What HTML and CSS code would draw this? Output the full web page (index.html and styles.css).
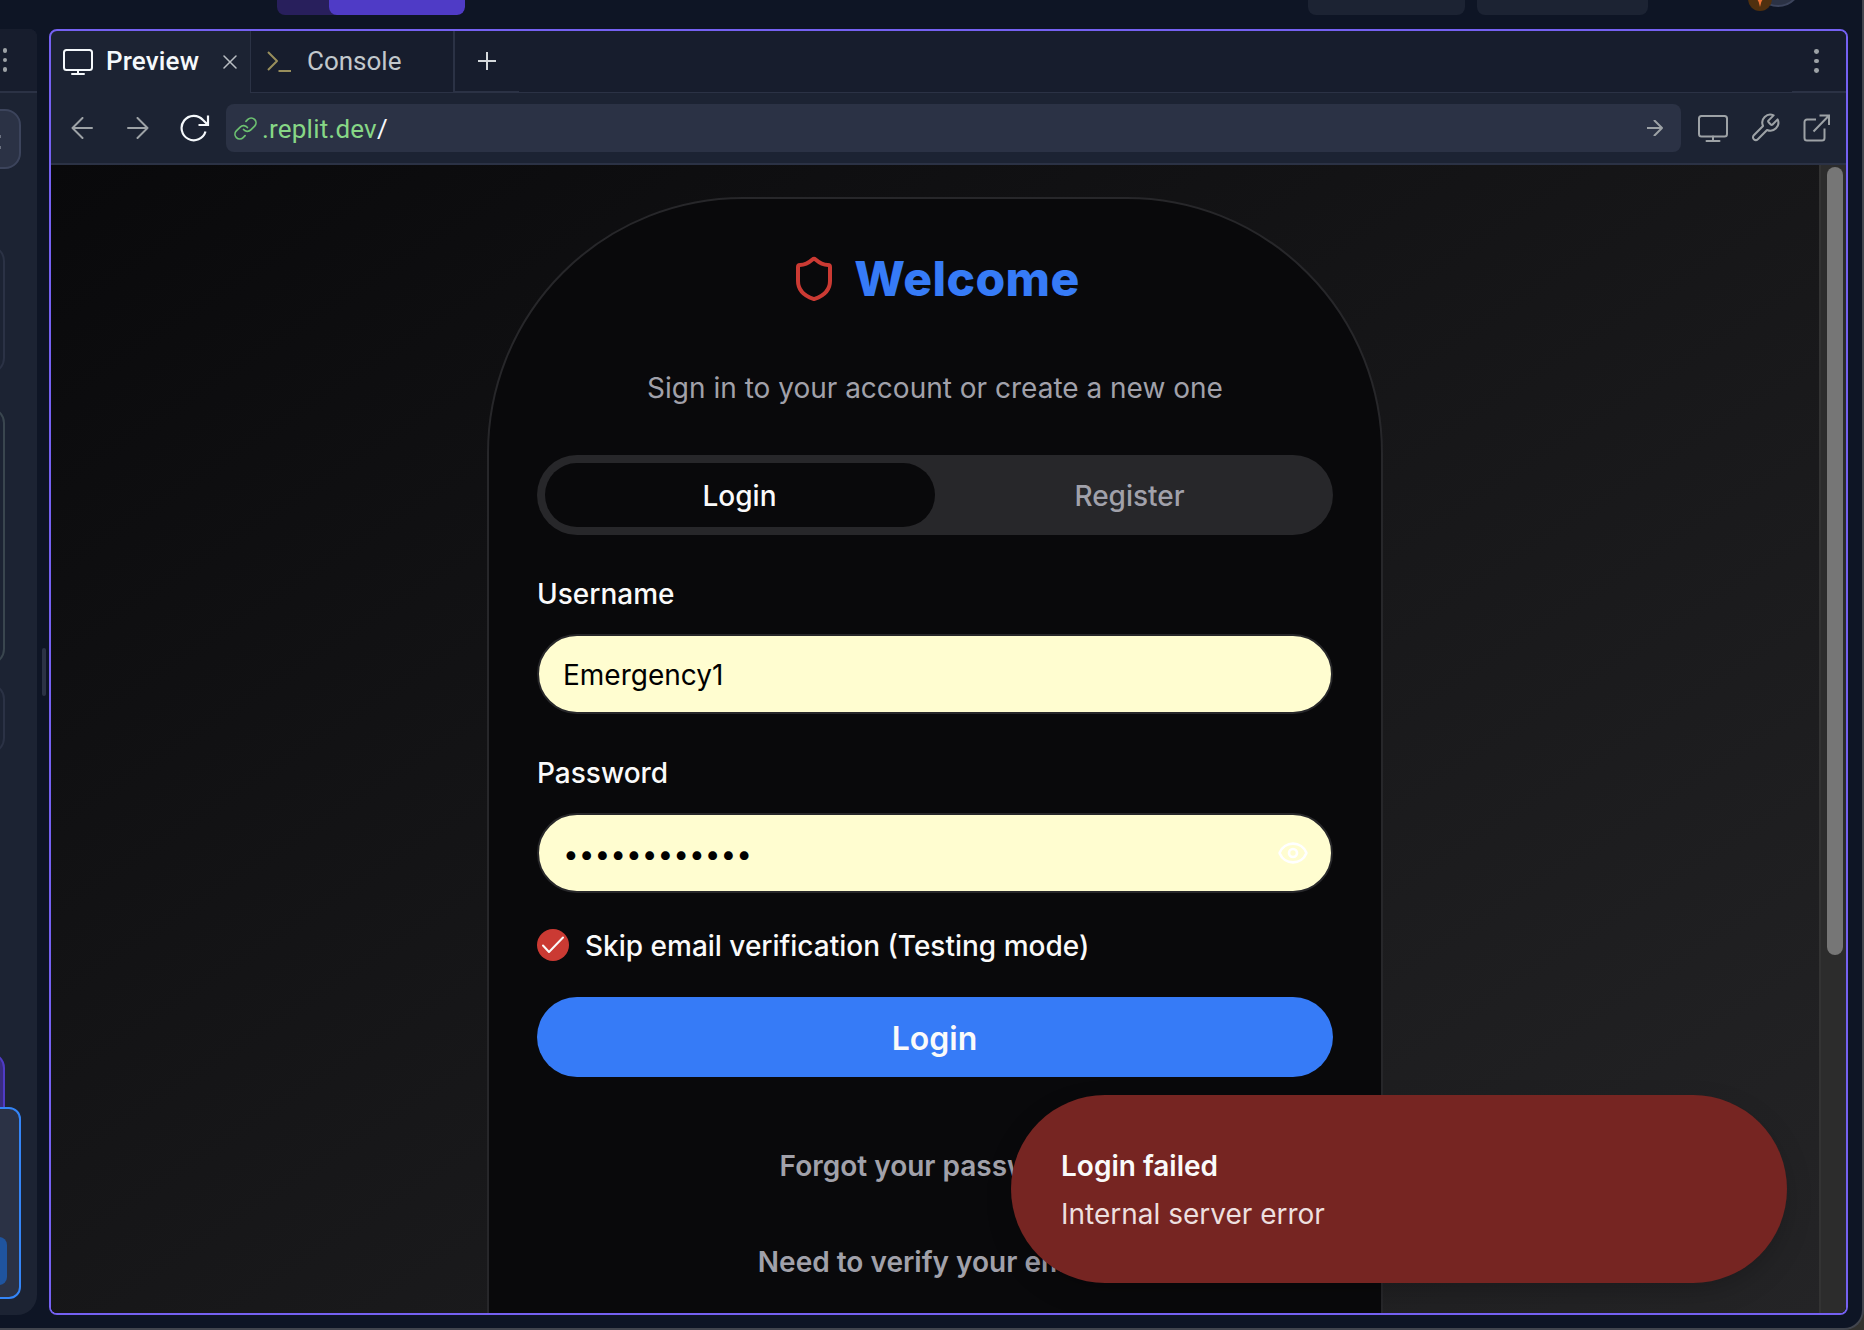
FILE: index.html
```html
<!DOCTYPE html>
<html lang="en">
<head>
<meta charset="utf-8">
<title>Preview</title>
<link rel="stylesheet" href="styles.css">
</head>
<body>
<div class="window">
  <header class="topbar">
    <div class="run"><div class="run-main"></div></div>
    <div class="chip chip-a"></div>
    <div class="chip chip-b"></div>
    <div class="avatars"><svg width="52" height="14" viewBox="0 0 52 14"><circle cx="30" cy="-17" r="23" fill="#2b3245" stroke="#3c445c" stroke-width="2"/><circle cx="12" cy="-1" r="12" fill="#50300f"/><path d="M8.500-2h7l-2.200 4-1.300 5-1.300-5z" fill="#ee7134"/></svg></div>
  </header>
  <div class="workspace">
    <aside class="side">
      <div class="side-head"><span class="dots"><i></i><i></i><i></i></span></div>
      <div class="side-body">
        <div class="frag pill"><i></i><i></i></div>
        <div class="frag box1"></div>
        <div class="frag box2"></div>
        <div class="frag box3"></div>
        <div class="frag purple"></div>
        <div class="frag prompt"><div class="send"></div></div>
      </div>
    </aside>
    <div class="gutter"><div class="handle"></div></div>
    <main class="pane">
      <nav class="tabs">
        <div class="tab active">
          <svg class="ic-mon" width="30" height="26" viewBox="0 0 30 26"><rect x="1" y="1" width="28" height="20" rx="2.500"/><path d="M15 21v4M9 25h12"/></svg>
          <span class="tab-name">Preview</span>
          <svg class="ic-x" width="14" height="14" viewBox="0 0 14 14"><path d="M1 1l12 12M13 1L1 13"/></svg>
        </div>
        <div class="tab console">
          <svg class="ic-term" width="25" height="21" viewBox="0 0 25 21"><path d="M1 1l9 9-9 9M11.500 20H24"/></svg>
          <span class="tab-name">Console</span>
        </div>
        <div class="add"><svg width="18" height="18" viewBox="0 0 18 18"><path d="M9 0v18M0 9h18"/></svg></div>
        <div class="spacer"></div>
        <div class="menu"><span class="dots"><i></i><i></i><i></i></span></div>
      </nav>
      <div class="toolbar">
        <svg class="nav-back" width="22" height="22" viewBox="0 0 22 22"><path d="M11.500 1L1.500 11l10 10M1.500 11H21"/></svg>
        <svg class="nav-fwd" width="22" height="22" viewBox="0 0 22 22"><path d="M10.500 1l10 10-10 10M20.500 11H1"/></svg>
        <svg class="nav-reload" width="30" height="28" viewBox="0 0 30 28"><path d="M25.500 17.500A12.200 12.200 0 1 1 23 6l5 5M28 1.500V11h-9.500"/></svg>
        <div class="url">
          <svg class="ic-link" width="23" height="23" viewBox="0 0 24 24"><path d="M10 13a5 5 0 0 0 7.540.540l4-4a5 5 0 0 0-7.070-7.070l-2 2M14 11a5 5 0 0 0-7.540-.540l-4 4a5 5 0 0 0 7.070 7.070l2-2"/></svg>
          <span class="url-text">.replit.dev<b>/</b></span>
          <svg class="ic-go" width="16" height="16" viewBox="0 0 16 16"><path d="M7.500.500L15 8l-7.500 7.500M15 8H0"/></svg>
        </div>
        <svg class="tool t-mon" width="30" height="27" viewBox="0 0 30 27"><rect x="1" y="1" width="28" height="20.500" rx="2.500"/><path d="M15 21.500V26M8.500 26h13"/></svg>
        <svg class="tool t-wrench" width="32" height="32" viewBox="0 0 24 24"><path d="M14.700 6.300a1 1 0 0 0 0 1.400l1.600 1.600a1 1 0 0 0 1.400 0l3.770-3.770a6 6 0 0 1-7.940 7.940l-6.910 6.910a2.120 2.120 0 0 1-3-3l6.910-6.910a6 6 0 0 1 7.940-7.940l-3.760 3.760z"/></svg>
        <svg class="tool t-ext" width="27" height="28" viewBox="0 0 27 28"><path d="M13 5.500H4A2.500 2.500 0 0 0 1.500 8v16A2.500 2.500 0 0 0 4 26.500h15a2.500 2.500 0 0 0 2.500-2.500v-9.500M16.500 1.500H26V11M26 1.500L10.500 17.500"/></svg>
      </div>
      <div class="page">
        <div class="viewport">
          <section class="card">
            <div class="title">
              <svg width="48" height="48" viewBox="0 0 24 24"><path d="M20 13c0 5-3.500 7.500-7.660 8.950a1 1 0 0 1-.670-.010C7.500 20.500 4 18 4 13V6a1 1 0 0 1 1-1c2 0 4.500-1.200 6.240-2.720a1.170 1.170 0 0 1 1.520 0C14.510 3.810 17 5 19 5a1 1 0 0 1 1 1z"/></svg>
              <h1>Welcome</h1>
            </div>
            <p class="sub">Sign in to your account or create a new one</p>
            <div class="switch">
              <div class="opt on">Login</div>
              <div class="opt">Register</div>
            </div>
            <label class="label">Username</label>
            <div class="field"><span>Emergency1</span></div>
            <label class="label label-pw">Password</label>
            <div class="field"><span class="mask">••••••••••••</span>
              <svg class="eye" width="32" height="32" viewBox="0 0 24 24"><path d="M2.060 12.350a1 1 0 0 1 0-.700 10.750 10.750 0 0 1 19.880 0 1 1 0 0 1 0 .700 10.750 10.750 0 0 1-19.880 0"/><circle cx="12" cy="12" r="3"/></svg>
            </div>
            <div class="check">
              <span class="box"><svg width="22" height="18" viewBox="0 0 22 18"><path d="M1 9.500l6 6.500L21 1.500"/></svg></span>
              <span class="check-label">Skip email verification (Testing mode)</span>
            </div>
            <button class="submit">Login</button>
            <a class="link">Forgot your password?</a>
            <a class="link link-2">Need to verify your email?</a>
          </section>
        </div>
        <div class="scroll"><div class="thumb"></div></div>
        <div class="toast"><strong>Login failed</strong><span>Internal server error</span></div>
      </div>
    </main>
  </div>
</div>
</body>
</html>
```
FILE: styles.css
```css
* { box-sizing: border-box; }
html, body { margin: 0; height: 100%; background: #33322f; overflow: hidden; }
svg { flex: none; display: block; fill: none; stroke: currentColor; stroke-width: 2; stroke-linecap: round; stroke-linejoin: round; }
i { display: block; }

.window {
  width: 1864px; height: 1330px; overflow: hidden;
  background: #0e1525; border: solid #42454e; border-width: 0 2px 2px 0;
  border-radius: 0 0 20px 0;
  font-family: Inter, "Liberation Sans", sans-serif; color: #fafafa;
  display: flex; flex-direction: column;
}

.topbar { height: 29px; flex: none; display: flex; align-items: flex-start; padding-left: 277px; }
.run { width: 188px; height: 15px; background: #281f5c; border-radius: 0 0 8px 8px; display: flex; justify-content: flex-end; overflow: hidden; }
.run-main { width: 136px; background: #4f3bc6; border-radius: 0 0 8px 8px; }
.chip { height: 15px; background: #1c2333; border-radius: 0 0 8px 8px; }
.chip-a { width: 157px; margin-left: 843px; }
.chip-b { width: 171px; margin-left: 12px; }
.avatars { margin-left: 100px; }
.avatars svg { stroke: none; }

.workspace { display: flex; height: 1286px; flex: none; }

/* left panel */
.side { width: 37px; background: #1c2333; border-radius: 0 8px 20px 0; overflow: hidden; flex: none; }
.side-head { height: 64px; background: #171d2d; border-bottom: 2px solid #2b3245; display: flex; align-items: center; padding-left: 2.500px; }
.dots { display: flex; flex-direction: column; gap: 4.700px; }
.dots i { width: 4.800px; height: 4.800px; border-radius: 50%; background: #9da2a6; }
.side-body { display: flex; flex-direction: column; align-items: flex-start; }
.frag { width: 45px; margin-left: -40px; border: 2px solid #2b3245; border-radius: 16px; flex: none; }
.pill { width: 61px; height: 60px; margin-top: 16px; background: #2b3245; border-color: #3c445c; display: flex; flex-direction: column; gap: 8px; padding: 24px 0 0 37px; }
.pill i { width: 2px; height: 3px; background: #6b7180; }
.box1 { height: 129px; margin-top: 76px; }
.box2 { height: 258px; margin-top: 33px; border-color: #3a464f; }
.box3 { height: 71px; margin-top: 18px; }
.purple { height: 75px; margin-top: 298px; background: #392c80; border-color: #4f3bc6; }
.prompt { width: 61px; height: 192px; margin-top: -20px; background: #2b3245; border-color: #3485f7; border-radius: 12px; display: flex; align-items: flex-end; padding-bottom: 12px; }
.send { width: 45px; height: 48px; background: #1f549e; border-radius: 8px; }

.gutter { width: 12px; flex: none; padding: 619px 0 0 5px; }
.handle { width: 4px; height: 48px; border-radius: 2px; background: #2b3245; }

/* preview pane */
.pane { width: 1799px; border: 2px solid #7561f2; border-radius: 8px; overflow: hidden; display: flex; flex-direction: column; background: #1c2333; }
.tabs { height: 62px; flex: none; display: flex; font-family: Roboto, "Liberation Sans", sans-serif; font-size: 26px; }
.tab { display: flex; align-items: center; flex: none; }
.active { width: 199px; padding-left: 12px; color: #f5f9fc; }
.active .tab-name { margin-left: 13px; width: 93px; font-weight: 500; letter-spacing: .15px; }
.tab-name { white-space: nowrap; line-height: 58px; padding-bottom: 2px; }
.ic-x { margin-left: 24px; color: #b9bec3; stroke-width: 1.500; }
.console { width: 205px; background: #171d2d; border: solid #2b3245; border-width: 0 2px 1px 1px; padding-left: 16px; color: #c2c8cc; }
.console .tab-name { margin-left: 15px; }
.ic-term { color: #988e5c; stroke-linecap: butt; }
.add { width: 64px; background: #171d2d; border-bottom: 2px solid #2b3245; display: flex; align-items: center; padding-left: 23px; color: #d5d9dc; }
.add svg { stroke-linecap: butt; }
.spacer { flex: 1; background: #171d2d; border-bottom: 1px solid #2b3245; }
.menu { width: 54px; background: #171d2d; border-bottom: 2px solid #2b3245; display: flex; align-items: center; padding-left: 22px; }

.toolbar { height: 72px; flex: none; display: flex; align-items: center; border-bottom: 2px solid #2b3245; color: #9da2a6; }
.nav-back { margin-left: 20px; }
.nav-fwd { margin-left: 34px; }
.nav-reload { margin-left: 31px; color: #f5f9fc; stroke-width: 2.200; stroke-linecap: butt; stroke-linejoin: miter; }
.url { width: 1455px; height: 48px; margin-left: 16px; background: #2b3245; border-radius: 8px; display: flex; align-items: center; padding: 0 18px 0 8px; flex: none; }
.ic-link { color: #6cc070; stroke-width: 1.800; }
.url-text { flex: 1; margin-left: 5px; padding-top: 1px; font: 26px/48px Roboto, "Liberation Sans", sans-serif; letter-spacing: .2px; color: #87d786; white-space: nowrap; }
.url-text b { font-weight: 400; color: #f5f9fc; }
.t-mon { margin-left: 17px; }
.t-wrench { margin-left: 21px; stroke-width: 1.550; }
.t-ext { margin-left: 22px; stroke-linecap: butt; stroke-linejoin: miter; }

.page { flex: 1; min-height: 0; display: flex; position: relative; background: #09090b; }
.viewport { flex: 1; overflow: hidden; padding: 32px 0 0 436px; background: linear-gradient(to bottom right, #09090b, #242426); }
.card { width: 896px; height: 1700px; background: #09090b; border: 2px solid #27272a; border-radius: 256px; padding: 56px 48px 0; display: flex; flex-direction: column; align-items: stretch; font-size: 28px; }
.title { display: flex; justify-content: center; align-items: center; gap: 16px; height: 48px; color: #cb3a33; }
.title h1 { margin: 0; font: 800 48px/48px Inter, sans-serif; color: #367bf7; letter-spacing: .4px; }
.sub { margin: 65px 0 0; line-height: 40px; text-align: center; color: #a1a1aa; white-space: nowrap; }
.switch { margin-top: 47px; height: 80px; flex: none; background: #27272a; border-radius: 40px; padding: 8px; display: flex; font-weight: 500; color: #a1a1aa; }
.opt { flex: 1; border-radius: 32px; line-height: 66px; height: 64px; padding-right: 1px; text-align: center; }
.on { background: #09090b; color: #fafafa; }
.label { margin-top: 45px; line-height: 28px; font-weight: 500; }
.label-pw { margin-top: 45px; }
.field { margin-top: 26px; height: 80px; flex: none; border: 2px solid #27272a; border-radius: 40px; background: #fffdd0; color: #000; display: flex; align-items: center; justify-content: space-between; padding: 0 22px 0 24px; }
.field span { padding-top: 2px; }
.eye { color: #fff; }
.check { margin-top: 36px; height: 32px; display: flex; align-items: center; gap: 16px; font-weight: 500; line-height: 32px; white-space: nowrap; }
.check-label { padding-top: 2px; }
.box { width: 32px; height: 32px; border-radius: 50%; background: #cb3a33; display: flex; align-items: center; justify-content: center; }
.submit { margin-top: 36px; height: 80px; flex: none; border: 0; border-radius: 40px; background: #367bf7; color: #fafafa; font: 600 32px/80px Inter, sans-serif; padding: 2px 1px 0 0; }
.link { margin-top: 69px; line-height: 40px; font-weight: 600; text-align: center; color: #a1a1aa; }
.link-2 { margin-top: 56px; }

.scroll { width: 27px; background: #2c2c2c; border-left: 2px solid #333; padding: 2px 0 0 6px; }
.thumb { width: 16px; height: 788px; border-radius: 8px; background: #767676; }

.toast { position: absolute; left: 960px; top: 930px; width: 776px; height: 188px; border-radius: 94px; background: #762522; box-shadow: 0 10px 30px -6px rgba(0,0,0,.25); padding: 51px 50px 0; display: flex; flex-direction: column; gap: 8px; font-size: 28px; line-height: 40px; color: #fafafa; }
.toast strong { font-weight: 600; }
.toast span { color: #eddfdf; }
```
